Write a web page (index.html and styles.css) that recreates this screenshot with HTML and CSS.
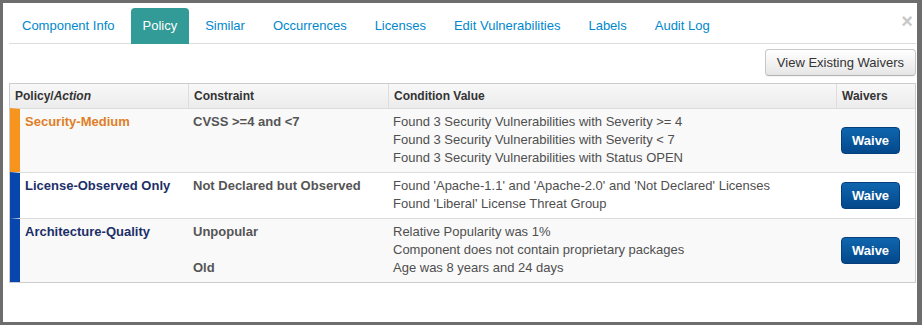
FILE: index.html
```html
<!DOCTYPE html>
<html>
<head>
<meta charset="utf-8">
<link rel="stylesheet" href="styles.css">
</head>
<body>
<div class="panel">
  <span class="close">&times;</span>
  <ul class="tabs">
    <li><a>Component Info</a></li>
    <li class="active"><a>Policy</a></li>
    <li><a>Similar</a></li>
    <li><a>Occurrences</a></li>
    <li><a>Licenses</a></li>
    <li><a>Edit Vulnerabilities</a></li>
    <li><a>Labels</a></li>
    <li><a>Audit Log</a></li>
  </ul>
  <div class="toolbar">
    <button class="btn">View Existing Waivers</button>
  </div>
  <table class="grid">
    <colgroup>
      <col class="c1"><col class="c2"><col class="c3"><col class="c4">
    </colgroup>
    <thead>
      <tr>
        <th>Policy/<em>Action</em></th>
        <th>Constraint</th>
        <th>Condition Value</th>
        <th>Waivers</th>
      </tr>
    </thead>
    <tbody>
      <tr class="odd">
        <td class="policy orange">Security-Medium</td>
        <td class="constraint">CVSS &gt;=4 and &lt;7</td>
        <td class="cond">Found 3 Security Vulnerabilities with Severity &gt;= 4<br>Found 3 Security Vulnerabilities with Severity &lt; 7<br>Found 3 Security Vulnerabilities with Status OPEN</td>
        <td class="waive"><button class="btn-waive">Waive</button></td>
      </tr>
      <tr>
        <td class="policy blue">License-Observed Only</td>
        <td class="constraint">Not Declared but Observed</td>
        <td class="cond">Found 'Apache-1.1' and 'Apache-2.0' and 'Not Declared' Licenses<br>Found 'Liberal' License Threat Group</td>
        <td class="waive"><button class="btn-waive">Waive</button></td>
      </tr>
      <tr class="odd">
        <td class="policy blue">Architecture-Quality</td>
        <td class="constraint">Unpopular<br>&nbsp;<br>Old</td>
        <td class="cond">Relative Popularity was 1%<br>Component does not contain proprietary packages<br>Age was 8 years and 24 days</td>
        <td class="waive"><button class="btn-waive">Waive</button></td>
      </tr>
    </tbody>
  </table>
</div>
</body>
</html>
```
FILE: styles.css
```css
html, body {
  margin: 0;
  padding: 0;
}
body {
  background: #6d6d6d;
  font-family: "Liberation Sans", Arial, Helvetica, sans-serif;
  font-size: 13px;
  color: #555;
}
.panel {
  position: relative;
  box-sizing: border-box;
  margin: 3px 5px 3px 3px;
  width: 914px;
  height: 319px;
  background: #fff;
  padding: 5px 1px 0 6px;
}
.close {
  position: absolute;
  top: 8px;
  right: 4px;
  font-size: 20px;
  font-weight: bold;
  line-height: 20px;
  color: #c8c8c8;
}
.tabs {
  list-style: none;
  margin: 0;
  padding: 0 0 0 1px;
  display: flex;
  gap: 4px;
  border-bottom: 1px solid #ddd;
  height: 35px;
}
.tabs li {
  margin-bottom: -1px;
}
.tabs a {
  display: block;
  padding: 9px 12px 8px;
  line-height: 18px;
  color: #0088cc;
  border-radius: 4px 4px 0 0;
}
.tabs .active a {
  background: #329a97;
  color: #fff;
  padding-bottom: 9px;
}
.toolbar {
  display: flex;
  justify-content: flex-end;
  margin-top: 5px;
}
.btn {
  font-family: inherit;
  font-size: 13px;
  line-height: 17px;
  color: #333;
  padding: 4px 11px;
  border: 1px solid #c8c8c8;
  border-bottom-color: #b3b3b3;
  border-radius: 4px;
  background: linear-gradient(#ffffff, #e6e6e6);
  box-shadow: inset 0 1px 0 rgba(255,255,255,.2), 0 1px 2px rgba(0,0,0,.05);
}
.grid {
  margin-top: 7px;
  width: 907px;
  table-layout: fixed;
  border-collapse: separate;
  border-spacing: 0;
  border: 1px solid #ccc;
}
.c1 { width: 178px; }
.c2 { width: 200px; }
.c3 { width: 448px; }
.c4 { width: 79px; }
.grid th {
  text-align: left;
  font-size: 12px;
  font-weight: bold;
  color: #333;
  line-height: 18px;
  padding: 3px 5px;
  background: linear-gradient(#f8f8f8, #ececec);
  border-left: 1px solid #ddd;
}
.grid th:first-child {
  border-left: 0;
}
.grid th em {
  font-style: italic;
}
.grid td {
  vertical-align: top;
  line-height: 18px;
  padding: 4px 5px 5px;
  border-top: 1px solid #ddd;
}
.grid tr.odd td {
  background: #f9f9f9;
}
.grid td.policy {
  font-weight: bold;
  border-left: 10px solid #0047ab;
}
.grid td.policy.orange {
  color: #e07e27;
  border-left-color: #f7941e;
}
.grid td.policy.blue {
  color: #1c2f69;
  border-left-color: #0747ad;
}
.grid td.constraint {
  font-weight: bold;
  color: #555;
}
.grid td.cond {
  color: #4f4f4f;
}
.grid td.waive {
  vertical-align: middle;
}
.btn-waive {
  font-family: inherit;
  font-size: 13px;
  font-weight: bold;
  line-height: 17px;
  color: #fff;
  padding: 4px 10px;
  border: 1px solid #063f7c;
  border-radius: 4px;
  background: linear-gradient(#0f66ae, #03488b);
}
```
